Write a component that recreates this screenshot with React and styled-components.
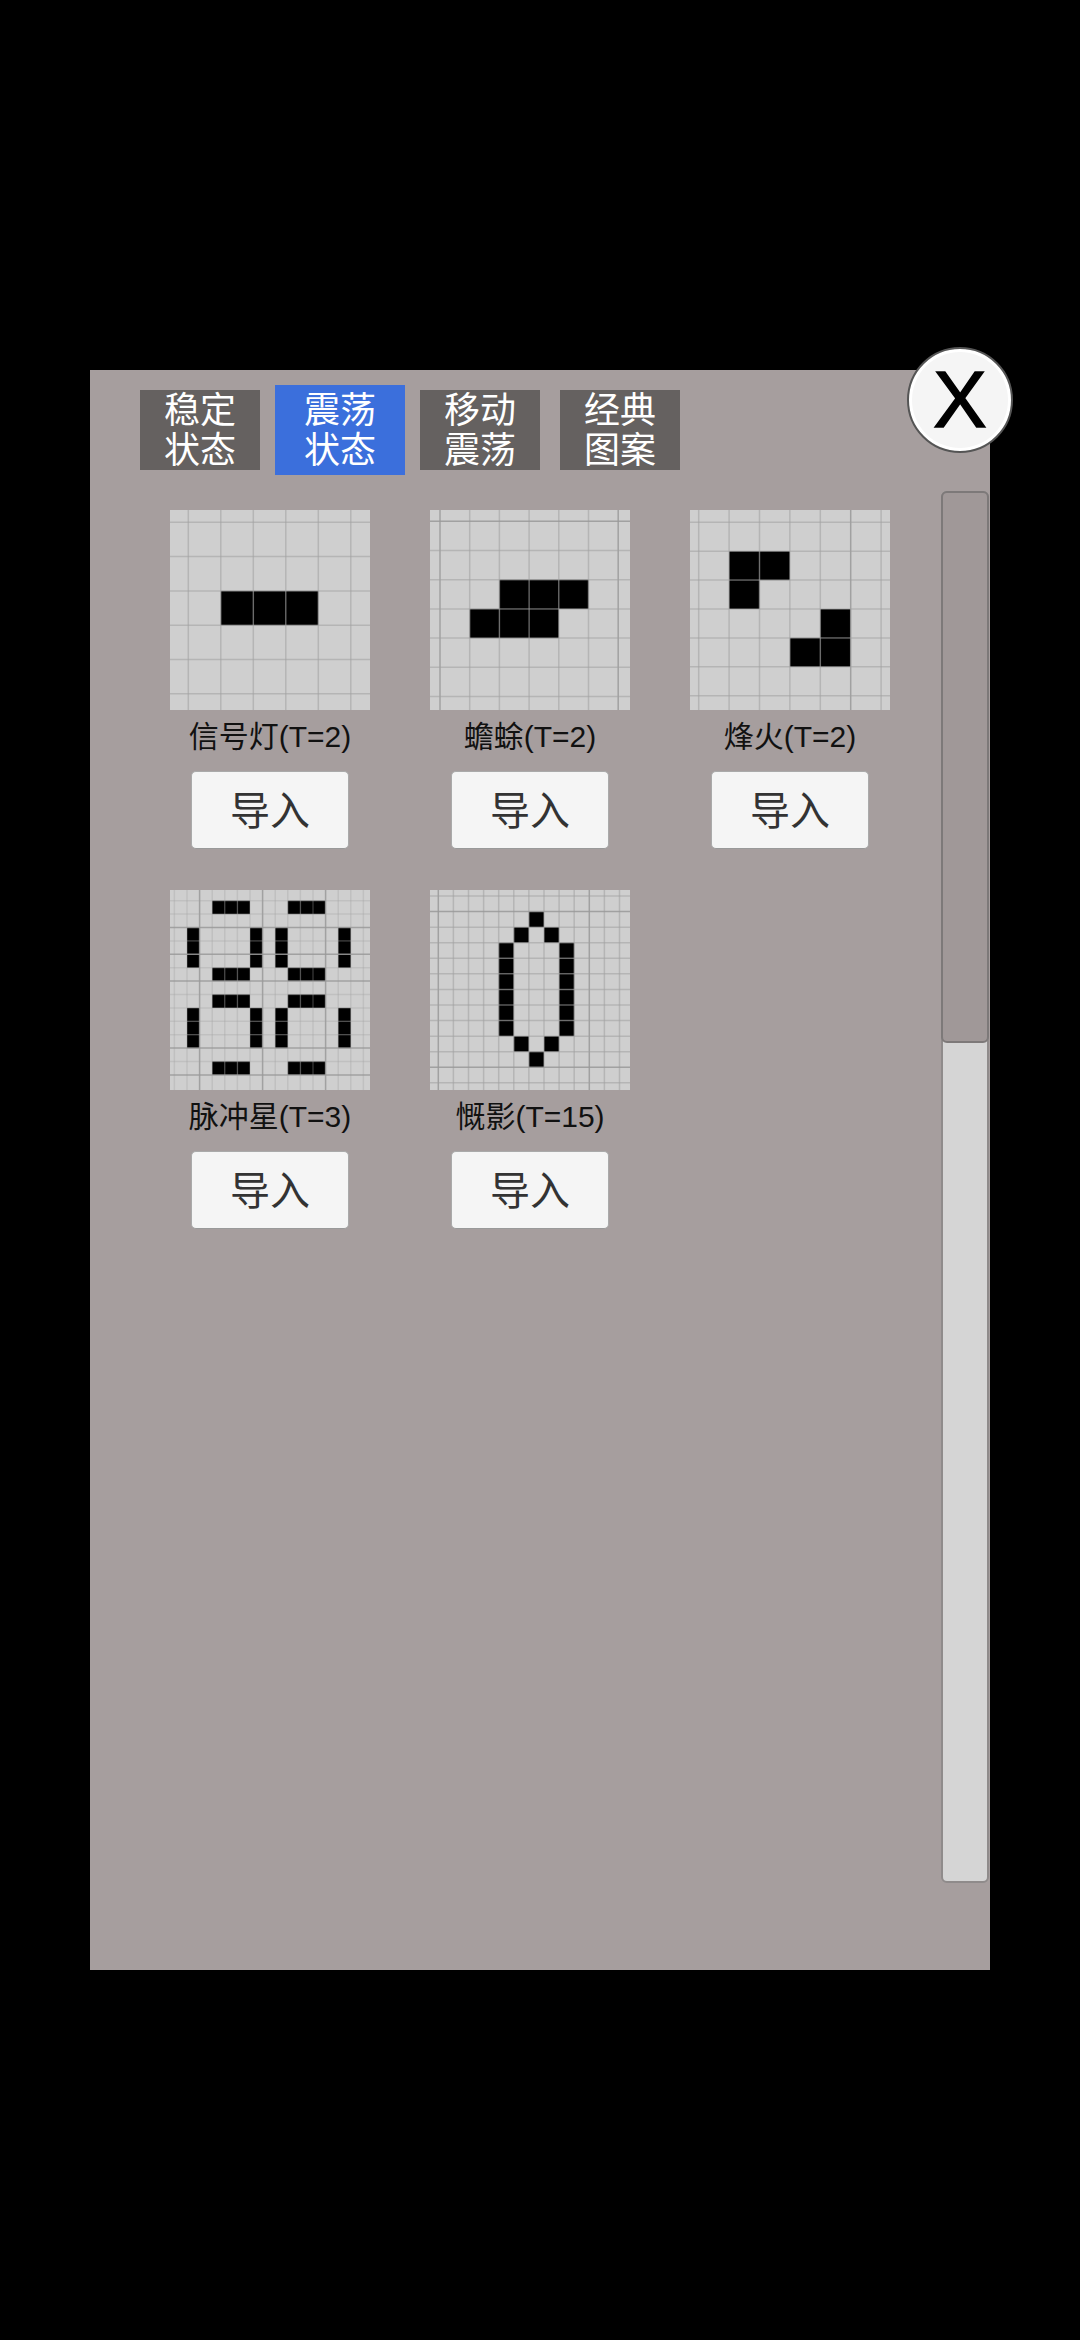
import React from 'react';
import styled, { createGlobalStyle } from 'styled-components';

const range = (from, to) => Array.from({ length: to - from + 1 }, (_, i) => from + i);

const pulsarBars = [0, 5, 7, 12].flatMap((row) =>
  [3, 4, 5, 9, 10, 11].map((col) => [row, col]),
);
const pulsarSides = [2, 3, 4, 8, 9, 10].flatMap((row) =>
  [1, 6, 8, 13].map((col) => [row, col]),
);
const pentaSides = range(3, 8).flatMap((row) => [
  [row, 4],
  [row, 8],
]);

const patterns = [
  {
    name: '信号灯(T=2)',
    x0: 18.3, dx: 32.5, nx: 6,
    y0: 12.3, dy: 34.3, ny: 6,
    cells: [[2, 1], [2, 2], [2, 3]],
  },
  {
    name: '蟾蜍(T=2)',
    x0: 10, dx: 29.7, nx: 7,
    y0: 11.3, dy: 29.2, ny: 7,
    majorX: [0, 6],
    majorY: [0],
    cells: [[2, 2], [2, 3], [2, 4], [3, 1], [3, 2], [3, 3]],
  },
  {
    name: '烽火(T=2)',
    x0: 8.7, dx: 30.4, nx: 7,
    y0: 12.3, dy: 28.9, ny: 7,
    majorX: [5],
    cells: [[1, 1], [1, 2], [2, 1], [3, 4], [4, 3], [4, 4]],
  },
  {
    name: '脉冲星(T=3)',
    x0: 4.4, dx: 12.6, nx: 16,
    y0: 10.7, dy: 13.4, ny: 14,
    faint: true,
    majorX: [2, 7, 12],
    majorY: [2, 4, 6, 11, 13],
    cells: [...pulsarBars, ...pulsarSides],
  },
  {
    name: '慨影(T=15)',
    x0: 8.3, dx: 15.1, nx: 13,
    y0: 6, dy: 15.57, ny: 13,
    majorX: [0, 10],
    majorY: [1, 11],
    cells: [
      [1, 6],
      [2, 5], [2, 7],
      ...pentaSides,
      [9, 5], [9, 7],
      [10, 6],
    ],
  },
];

const tabs = [
  ['稳定', '状态'],
  ['震荡', '状态'],
  ['移动', '震荡'],
  ['经典', '图案'],
];

function GridLine({ major, faint, ...points }) {
  return (
    <line
      {...points}
      stroke={major ? '#999' : '#a0a0a0'}
      strokeWidth='1.5'
      strokeOpacity={major ? 0.85 : faint ? 0.3 : 0.55}
    />
  );
}

function PatternGrid({ pattern }) {
  const { x0, dx, nx, y0, dy, ny, cells, faint, majorX = [], majorY = [] } = pattern;
  return (
    <GridImage viewBox='0 0 200 200'>
      {cells.map(([row, col]) => (
        <rect
          key={`${row}-${col}`}
          x={x0 + dx * col}
          y={y0 + dy * row}
          width={dx}
          height={dy}
          fill='#000'
        />
      ))}
      {range(0, nx - 1).map((i) => (
        <GridLine
          key={`x${i}`}
          x1={x0 + dx * i}
          x2={x0 + dx * i}
          y1='0'
          y2='200'
          faint={faint}
          major={majorX.includes(i)}
        />
      ))}
      {range(0, ny - 1).map((i) => (
        <GridLine
          key={`y${i}`}
          y1={y0 + dy * i}
          y2={y0 + dy * i}
          x1='0'
          x2='200'
          faint={faint}
          major={majorY.includes(i)}
        />
      ))}
    </GridImage>
  );
}

export default function App() {
  return (
    <>
      <GlobalStyle />
      <Panel>
        <CloseButton>X</CloseButton>
        <TabBar>
          {tabs.map(([top, bottom], i) => (
            <Tab key={top + bottom} $active={i === 1}>
              <span>{top}</span>
              <span>{bottom}</span>
            </Tab>
          ))}
        </TabBar>
        <Body>
          <CardGrid>
            {patterns.map((pattern) => (
              <Card key={pattern.name}>
                <PatternGrid pattern={pattern} />
                <Label>{pattern.name}</Label>
                <ImportButton>导入</ImportButton>
              </Card>
            ))}
          </CardGrid>
          <ScrollTrack>
            <ScrollThumb />
          </ScrollTrack>
        </Body>
      </Panel>
    </>
  );
}

const GlobalStyle = createGlobalStyle`
  html, body {
    margin: 0;
    background: #000;
  }
  body {
    height: 2340px;
    overflow: hidden;
    font-family: 'Liberation Sans', 'Noto Sans CJK SC', sans-serif;
  }
  * {
    box-sizing: border-box;
  }
`;

const Panel = styled.div`
  position: relative;
  width: 900px;
  height: 1600px;
  margin: 370px 0 0 90px;
  padding-top: 20px;
  background: #a69e9e;
`;

const CloseButton = styled.button`
  position: absolute;
  top: -23px;
  left: 817px;
  width: 106px;
  height: 106px;
  padding: 0;
  display: flex;
  align-items: center;
  justify-content: center;
  border: 2px solid #555;
  border-radius: 50%;
  background: #f5f5f5;
  box-shadow: inset 0 0 0 3px #fff;
  color: #000;
  font-family: 'Liberation Sans', sans-serif;
  font-size: 80px;
  line-height: 1;
  -webkit-text-stroke: 1.5px #000;
`;

const TabBar = styled.div`
  display: flex;
  gap: 20px;
  height: 80px;
  padding-left: 50px;
`;

const Tab = styled.div`
  width: ${(props) => (props.$active ? '130px' : '120px')};
  height: ${(props) => (props.$active ? '90px' : '80px')};
  margin: ${(props) => (props.$active ? '-5px' : '0')};
  padding-top: 2px;
  display: flex;
  flex-direction: column;
  align-items: center;
  justify-content: center;
  background: ${(props) => (props.$active ? '#3b6fdc' : '#656160')};
  color: #fff;
  font-size: 36px;
  line-height: 40px;
`;

const Body = styled.div`
  display: flex;
  justify-content: space-between;
  margin-top: 21px;
  padding: 0 1px 0 80px;
`;

const CardGrid = styled.div`
  display: grid;
  grid-template-columns: repeat(3, 200px);
  grid-auto-rows: 380px;
  column-gap: 60px;
  padding-top: 19px;
  align-content: start;
`;

const Card = styled.div`
  display: flex;
  flex-direction: column;
  align-items: center;
`;

const GridImage = styled.svg`
  display: block;
  width: 200px;
  height: 200px;
  background: #cfcfcf;
`;

const Label = styled.div`
  margin-top: 7px;
  height: 40px;
  color: #111;
  font-size: 30px;
  line-height: 40px;
  white-space: nowrap;
`;

const ImportButton = styled.button`
  width: 158px;
  height: 78px;
  margin-top: 14px;
  padding: 0 0 4px;
  border: 1px solid #aaa;
  border-bottom-color: #999;
  border-radius: 5px;
  background: #f5f5f5;
  color: #333;
  font-family: 'Liberation Sans', 'Noto Sans CJK SC', sans-serif;
  font-size: 40px;
`;

const ScrollTrack = styled.div`
  width: 48px;
  height: 1392px;
  border: 2px solid #8f8b8b;
  border-radius: 6px;
  background: #d5d5d5;
`;

const ScrollThumb = styled.div`
  width: 48px;
  height: 552px;
  margin: -2px;
  border: 2px solid #7d7979;
  border-radius: 6px;
  background: #a09898;
`;
